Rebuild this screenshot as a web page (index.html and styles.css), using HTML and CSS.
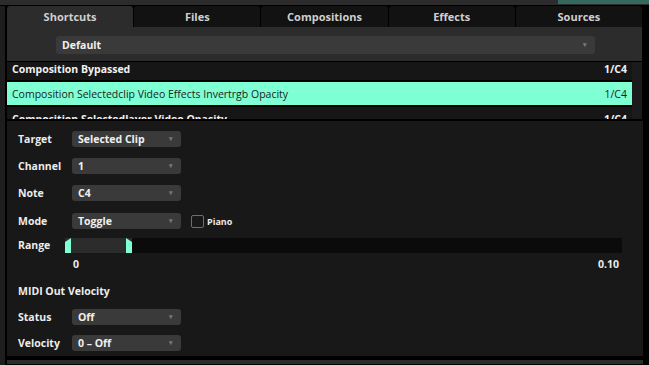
FILE: index.html
```html
<!DOCTYPE html>
<html lang="en">
<head>
    <meta charset="UTF-8">
    <title>Shortcuts</title>
    <link rel="stylesheet" href="styles.css">
</head>
<body>
    <div class="app">
        <div class="topstrip"><div class="topstrip-accent"></div></div>
        <div class="main">
            <div class="sidebar"></div>
            <div class="content">
                <div class="tabs">
                    <div class="tab active">Shortcuts</div>
                    <div class="tab">Files</div>
                    <div class="tab">Compositions</div>
                    <div class="tab">Effects</div>
                    <div class="tab">Sources</div>
                </div>

                <div class="presetbar">
                    <div class="select wide">Default<span class="arrow">&#9662;</span></div>
                </div>

                <div class="listwrap">
                    <div class="list">
                        <div class="item"><span class="name">Composition Bypassed</span><span class="key">1/C4</span></div>
                        <div class="item selected"><span class="name">Composition Selectedclip Video Effects Invertrgb Opacity</span><span class="key">1/C4</span></div>
                        <div class="item"><span class="name">Composition Selectedlayer Video Opacity</span><span class="key">1/C4</span></div>
                    </div>
                    <div class="scrolltrack"></div>
                </div>

                <div class="panel">
                    <div class="row r-target">
                        <label>Target</label>
                        <div class="select">Selected Clip<span class="arrow">&#9662;</span></div>
                    </div>
                    <div class="row r-channel">
                        <label>Channel</label>
                        <div class="select">1<span class="arrow">&#9662;</span></div>
                    </div>
                    <div class="row r-note">
                        <label>Note</label>
                        <div class="select">C4<span class="arrow">&#9662;</span></div>
                    </div>
                    <div class="row r-mode">
                        <label>Mode</label>
                        <div class="select">Toggle<span class="arrow">&#9662;</span></div>
                        <span class="check"></span>
                        <span class="check-label">Piano</span>
                    </div>
                    <div class="row r-range">
                        <label class="range-label">Range</label>
                        <div class="track">
                            <div class="span-fill" style="width: 67px;">
                                <span class="handle left"></span>
                                <span class="handle right"></span>
                            </div>
                        </div>
                    </div>
                    <div class="values">
                        <span>0</span>
                        <span>0.10</span>
                    </div>
                    <div class="heading">MIDI Out Velocity</div>
                    <div class="row r-status">
                        <label>Status</label>
                        <div class="select">Off<span class="arrow">&#9662;</span></div>
                    </div>
                    <div class="row r-velocity">
                        <label>Velocity</label>
                        <div class="select">0 &ndash; Off<span class="arrow">&#9662;</span></div>
                    </div>
                </div>
                <div class="bottombar"></div>
            </div>
        </div>
    </div>
</body>
</html>
```

FILE: styles.css
```css
body {
    margin: 0;
    background: #000;
    font-family: "Open Sans", "Noto Sans", sans-serif;
    font-size: 10.5px;
    color: #ececec;
}
.app {
    width: 649px;
    height: 365px;
    overflow: hidden;
    background: #000;
}
.topstrip {
    height: 5px;
    background: #2c2c2c;
    display: flex;
    justify-content: flex-end;
    margin-bottom: 1px;
}
.topstrip-accent {
    width: 91px;
    height: 4px;
    background: #346a5d;
}
.main {
    display: flex;
    height: 359px;
}
.sidebar {
    width: 5px;
    background: #1e1e1e;
    margin-right: 2px;
}
.content {
    width: 636px;
    display: flex;
    flex-direction: column;
}

/* tabs */
.tabs {
    display: flex;
    height: 21px;
    gap: 1px;
    margin-right: 1px;
}
.tab {
    flex: 1;
    background: #121212;
    color: #cfcfcf;
    font-weight: 700;
    font-size: 11px;
    text-align: center;
    line-height: 21px;
    border-radius: 3px 3px 0 0;
}
.tab.active {
    background: #2c2c2c;
}

/* preset selector */
.presetbar {
    background: #2c2c2c;
    height: 34px;
    padding: 9px 0 0 49px;
    box-sizing: border-box;
    margin-right: 1px;
}

.select {
    position: relative;
    width: 109px;
    height: 16px;
    line-height: 16px;
    background: #3a3a3a;
    border-radius: 3px;
    padding-left: 6px;
    box-sizing: border-box;
    font-weight: 700;
    color: #f0f0f0;
}
.select.wide {
    width: 539px;
    height: 18px;
    line-height: 18px;
}
.arrow {
    position: absolute;
    right: 8px;
    top: 0;
    font-size: 7px;
    color: #777;
}

/* list */
.listwrap {
    display: flex;
    height: 57px;
    border-top: 1px solid #000;
    margin-right: 1px;
}
.list {
    width: 625px;
    overflow: hidden;
    display: flex;
    flex-direction: column;
    gap: 2px;
}
.item {
    flex: none;
    height: 23px;
    display: flex;
    align-items: center;
    justify-content: space-between;
    padding: 0 5px;
    background: #161616;
    font-weight: 700;
    color: #f2f2f2;
}
.item:first-child {
    margin-top: -5px;
}
.item.selected {
    background: #7fffd4;
    color: #1c1c1c;
    font-weight: 400;
}
.scrolltrack {
    flex: 1;
    background: #1b1b1b;
}

/* settings panel */
.panel {
    margin-top: 2px;
    height: 235px;
    background: #181818;
    padding: 10px 0 0 11px;
    box-sizing: border-box;
}
.row {
    display: flex;
    align-items: center;
    height: 16px;
}
.row label {
    width: 54px;
    font-weight: 700;
}
.r-channel, .r-note {
    margin-top: 11px;
}
.r-mode {
    margin-top: 12px;
}
.check {
    width: 11px;
    height: 11px;
    border: 1px solid #6e6e6e;
    border-radius: 2px;
    margin-left: 10px;
    margin-right: 3px;
}
.check-label {
    font-size: 9px;
    font-weight: 700;
}
.r-range {
    margin-top: 9px;
    height: 15px;
}
.r-range .range-label {
    width: 47px;
    margin-top: -1px;
}
.track {
    width: 557px;
    height: 15px;
    background: #0b0b0b;
}
.span-fill {
    position: relative;
    height: 100%;
    background: #2c2c2c;
}
.handle {
    position: absolute;
    top: 0;
    width: 6px;
    height: 15px;
    background: #7fffd4;
}
.handle.left {
    left: 0;
    clip-path: polygon(0 4px, 6px 0, 6px 100%, 0 100%);
}
.handle.right {
    right: 0;
    clip-path: polygon(0 0, 6px 4px, 6px 100%, 0 100%);
}
.values {
    display: flex;
    justify-content: space-between;
    width: 546px;
    padding-left: 55px;
    margin-top: 4px;
    height: 15px;
    line-height: 15px;
    font-weight: 700;
}
.heading {
    margin-top: 12px;
    height: 15px;
    line-height: 15px;
    font-weight: 700;
}
.r-status {
    margin-top: 10px;
}
.r-velocity {
    margin-top: 10px;
}
.bottombar {
    margin-top: 4px;
    height: 4px;
    background: #2c2c2c;
}
```
